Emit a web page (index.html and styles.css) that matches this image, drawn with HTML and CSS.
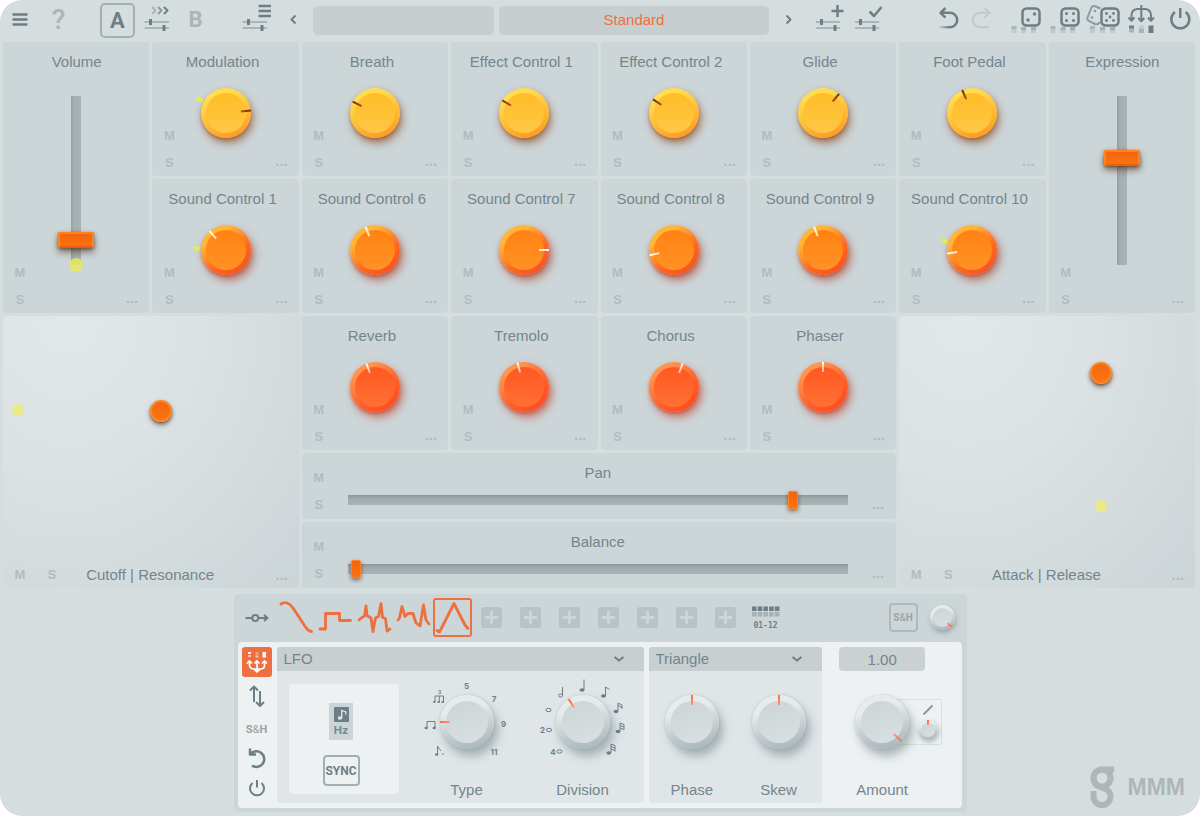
FILE: index.html
```html
<!DOCTYPE html>
<html lang="en">
<head>
<meta charset="utf-8">
<title>MMM</title>
<link rel="stylesheet" href="styles.css">
</head>
<body>
<main class="app">
<header class="topbar">
  <div class="group">
    <button class="icon" aria-label="Menu"><svg viewBox="0 0 35 40"><path class="s w25" d="M10.500 14.500h15M10.500 19.500h15M10.500 24.500h15"/></svg></button>
    <button class="glyph glyph--help" aria-label="Help">?</button>
  </div>
  <div class="group group--ab">
    <button class="glyph glyph--on">A</button>
    <button class="icon" aria-label="Copy A to B"><svg viewBox="0 0 35 40"><path class="s p" d="M5.500 22h24.500M5.500 28h24.500"/><path class="s w3" d="M11.500 19v6M25 25v6"/><path class="s p" d="M13 7l3.500 3.500L13 14"/><path class="s h" d="M19 7l3.500 3.500L19 14"/><path class="s" d="M25 7l3.500 3.500L25 14"/></svg></button>
    <button class="glyph">B</button>
  </div>
  <div class="group group--preset">
    <button class="icon" aria-label="Preset list"><svg viewBox="0 0 35 40"><path class="s p" d="M3.500 22H28M3.500 28H28"/><path class="s w3" d="M9.500 19v6M23 25v6"/><path class="s w25" d="M19.500 6h12.500M19.500 11h12.500M19.500 16h12.500"/></svg></button>
    <button class="icon icon--nav" aria-label="Previous preset"><svg viewBox="0 0 24 40"><path class="s" d="M13.500 15.500l-4 4 4 4"/></svg></button>
  </div>
  <div class="fields">
    <button class="field field--bank" aria-label="Bank"></button>
    <button class="field field--name">Standard</button>
  </div>
  <div class="group group--save">
    <button class="icon icon--nav" aria-label="Next preset"><svg viewBox="0 0 24 40"><path class="s" d="M10.500 15.500l4 4-4 4"/></svg></button>
    <button class="icon icon--add" aria-label="Add preset"><svg viewBox="0 0 35 40"><path class="s p" d="M4 22h24M4 28h24"/><path class="s w3" d="M9.500 19v6M23 25v6"/><path class="s w25" d="M25.500 5v12M19.500 11h12"/></svg></button>
    <button class="icon" aria-label="Save preset"><svg viewBox="0 0 35 40"><path class="s p" d="M4 22h24M4 28h24"/><path class="s w3" d="M9.500 19v6M23 25v6"/><path class="s w25" d="M18.500 11.500l4.500 4.500 7.500-9"/></svg></button>
  </div>
  <div class="group group--history">
    <button class="icon" aria-label="Undo"><svg viewBox="0 0 35 40"><defs><linearGradient id="fade" gradientUnits="userSpaceOnUse" x1="8" x2="19" y1="0" y2="0"><stop stop-color="#6d7f86" stop-opacity="0"/><stop offset="1" stop-color="#6d7f86"/></linearGradient></defs><path class="s w25" d="M15.500 8L10.500 12.800l5 4.800M11 12.800h9a7.200 7.200 0 0 1 0 14.400h-1"/><path d="M8.500 26H19v2.400H8.500z" fill="url(#fade)"/></svg></button>
    <button class="icon" disabled aria-label="Redo"><svg viewBox="0 0 35 40"><path class="s q" d="M19.500 8l5 4.800-5 4.800M24 12.800h-9a7.200 7.200 0 0 0 0 14.400h9"/></svg></button>
  </div>
  <div class="group group--random">
    <button class="icon" aria-label="Randomize a little"><svg viewBox="0 0 35 40"><path class="f p" d="M1.500 26h5v3h-5zM11 27h5v3h-5zM21 27h5v3h-5z"/><path class="f q" d="M1.500 29h5v4h-5zM11 29h5v4h-5zM21 29h5v4h-5z"/><rect class="s w25" x="12.500" y="8.500" width="17" height="17" rx="4"/><circle class="f" cx="18" cy="20" r="1.700"/><circle class="f" cx="24.500" cy="14" r="1.700"/></svg></button>
    <button class="icon" aria-label="Randomize more"><svg viewBox="0 0 35 40"><path class="f p" d="M2.500 26h5v3h-5zM12.500 27h5v3h-5zM22 27h5v3h-5z"/><path class="f q" d="M2.500 29h5v4h-5zM12.500 29h5v4h-5zM22 29h5v4h-5z"/><rect class="s w25" x="13.500" y="8.500" width="17" height="17" rx="4"/><g class="f"><circle cx="18.500" cy="13.500" r="1.500"/><circle cx="25.500" cy="13.500" r="1.500"/><circle cx="18.500" cy="20.500" r="1.500"/><circle cx="25.500" cy="20.500" r="1.500"/></g></svg></button>
    <button class="icon" aria-label="Randomize everything"><svg viewBox="0 0 35 40"><path class="f p" d="M4 26h5v3H4zM14 27h5v3h-5zM24 27h5v3h-5z"/><path class="f q" d="M4 29h5v4H4zM14 29h5v4h-5zM24 29h5v4h-5z"/><path class="s h" d="M14.500 8.500L9 6.300Q6.500 5.500 5.500 7.500L1.500 17.500Q.8 20 3 21.200L9 24q3 1 5-2"/><circle class="f h" cx="9" cy="11" r="1.300"/><circle class="f h" cx="6" cy="17.500" r="1.300"/><rect class="s w25" x="15.500" y="8.500" width="17" height="17" rx="4"/><g class="f"><circle cx="20.500" cy="13.500" r="1.400"/><circle cx="27.500" cy="13.500" r="1.400"/><circle cx="24" cy="17" r="1.400"/><circle cx="20.500" cy="20.500" r="1.400"/><circle cx="27.500" cy="20.500" r="1.400"/></g></svg></button>
    <button class="icon" aria-label="Modulation routing"><svg viewBox="0 0 35 40"><path class="s" d="M17.300 5v15M7.500 19v-4Q8 9.500 13 9h8.500Q26.500 9.500 27 15v4M4.500 17.500l3 3.200 3-3.200M14.300 18l3 3.200 3-3.200M24 17.500l3 3.200 3-3.200"/><path class="f" d="M5 25.500h5v3H5zM24.500 25.500h5V33h-5z"/><path class="f p" d="M5 28.500h5v4H5zM15 29h5v4h-5z"/><path class="f q" d="M15 25.500h5v4h-5z"/></svg></button>
    <button class="icon" aria-label="Power"><svg viewBox="0 0 35 40"><path class="s w25" d="M18.300 8v10M13 12a9 9 0 1 0 10.600 0"/></svg></button>
  </div>
</header>

<section class="grid">
  <div class="tile tile--tall">
    <label class="tile__label" for="volume">Volume</label>
    <div class="fader"><input id="volume" type="range" min="0" max="1000" value="111"><span class="dot dot--base"></span></div>
    <button class="ms ms--m">M</button><button class="ms ms--s">S</button><button class="more" aria-label="More">...</button>
  </div>
  <div class="tile"><label class="tile__label" for="k1">Modulation</label>
    <div class="knob knob--amber" style="--angle:84deg;--mod:-63deg"><span class="knob__tick"></span><span class="knob__mod"></span><input id="k1" type="range"></div>
    <button class="ms ms--m">M</button><button class="ms ms--s">S</button><button class="more" aria-label="More">...</button></div>
  <div class="tile"><label class="tile__label" for="k2">Breath</label>
    <div class="knob knob--amber" style="--angle:-63deg"><span class="knob__tick"></span><input id="k2" type="range"></div>
    <button class="ms ms--m">M</button><button class="ms ms--s">S</button><button class="more" aria-label="More">...</button></div>
  <div class="tile"><label class="tile__label" for="k3">Effect Control 1</label>
    <div class="knob knob--amber" style="--angle:-60deg"><span class="knob__tick"></span><input id="k3" type="range"></div>
    <button class="ms ms--m">M</button><button class="ms ms--s">S</button><button class="more" aria-label="More">...</button></div>
  <div class="tile"><label class="tile__label" for="k4">Effect Control 2</label>
    <div class="knob knob--amber" style="--angle:-57deg"><span class="knob__tick"></span><input id="k4" type="range"></div>
    <button class="ms ms--m">M</button><button class="ms ms--s">S</button><button class="more" aria-label="More">...</button></div>
  <div class="tile"><label class="tile__label" for="k5">Glide</label>
    <div class="knob knob--amber" style="--angle:40deg"><span class="knob__tick"></span><input id="k5" type="range"></div>
    <button class="ms ms--m">M</button><button class="ms ms--s">S</button><button class="more" aria-label="More">...</button></div>
  <div class="tile"><label class="tile__label" for="k6">Foot Pedal</label>
    <div class="knob knob--amber" style="--angle:-23deg"><span class="knob__tick"></span><input id="k6" type="range"></div>
    <button class="ms ms--m">M</button><button class="ms ms--s">S</button><button class="more" aria-label="More">...</button></div>
  <div class="tile tile--tall">
    <label class="tile__label" for="expression">Expression</label>
    <div class="fader"><input id="expression" type="range" min="0" max="1000" value="650"></div>
    <button class="ms ms--m">M</button><button class="ms ms--s">S</button><button class="more" aria-label="More">...</button>
  </div>

  <div class="tile"><label class="tile__label" for="k7">Sound Control 1</label>
    <div class="knob knob--orange" style="--angle:-41deg;--mod:-87deg"><span class="knob__tick"></span><span class="knob__mod"></span><input id="k7" type="range"></div>
    <button class="ms ms--m">M</button><button class="ms ms--s">S</button><button class="more" aria-label="More">...</button></div>
  <div class="tile"><label class="tile__label" for="k8">Sound Control 6</label>
    <div class="knob knob--orange" style="--angle:-22deg"><span class="knob__tick"></span><input id="k8" type="range"></div>
    <button class="ms ms--m">M</button><button class="ms ms--s">S</button><button class="more" aria-label="More">...</button></div>
  <div class="tile"><label class="tile__label" for="k9">Sound Control 7</label>
    <div class="knob knob--orange" style="--angle:90deg"><span class="knob__tick"></span><input id="k9" type="range"></div>
    <button class="ms ms--m">M</button><button class="ms ms--s">S</button><button class="more" aria-label="More">...</button></div>
  <div class="tile"><label class="tile__label" for="k10">Sound Control 8</label>
    <div class="knob knob--orange" style="--angle:-102deg"><span class="knob__tick"></span><input id="k10" type="range"></div>
    <button class="ms ms--m">M</button><button class="ms ms--s">S</button><button class="more" aria-label="More">...</button></div>
  <div class="tile"><label class="tile__label" for="k11">Sound Control 9</label>
    <div class="knob knob--orange" style="--angle:-21deg"><span class="knob__tick"></span><input id="k11" type="range"></div>
    <button class="ms ms--m">M</button><button class="ms ms--s">S</button><button class="more" aria-label="More">...</button></div>
  <div class="tile"><label class="tile__label" for="k12">Sound Control 10</label>
    <div class="knob knob--orange" style="--angle:-98deg;--mod:-71deg"><span class="knob__tick"></span><span class="knob__mod"></span><input id="k12" type="range"></div>
    <button class="ms ms--m">M</button><button class="ms ms--s">S</button><button class="more" aria-label="More">...</button></div>

  <div class="pad">
    <span class="dot" style="left:5.200%;top:34.600%"></span>
    <button class="puck" style="left:53.500%;top:35%" aria-label="Cutoff and resonance"></button>
    <div class="pad__bar"><button class="ms">M</button><button class="ms">S</button><span class="pad__label">Cutoff | Resonance</span><button class="more" aria-label="More">...</button></div>
  </div>
  <div class="tile"><label class="tile__label" for="k13">Reverb</label>
    <div class="knob knob--red" style="--angle:-20deg"><span class="knob__tick"></span><input id="k13" type="range"></div>
    <button class="ms ms--m">M</button><button class="ms ms--s">S</button><button class="more" aria-label="More">...</button></div>
  <div class="tile"><label class="tile__label" for="k14">Tremolo</label>
    <div class="knob knob--red" style="--angle:-15deg"><span class="knob__tick"></span><input id="k14" type="range"></div>
    <button class="ms ms--m">M</button><button class="ms ms--s">S</button><button class="more" aria-label="More">...</button></div>
  <div class="tile"><label class="tile__label" for="k15">Chorus</label>
    <div class="knob knob--red" style="--angle:20deg"><span class="knob__tick"></span><input id="k15" type="range"></div>
    <button class="ms ms--m">M</button><button class="ms ms--s">S</button><button class="more" aria-label="More">...</button></div>
  <div class="tile"><label class="tile__label" for="k16">Phaser</label>
    <div class="knob knob--red" style="--angle:0deg"><span class="knob__tick"></span><input id="k16" type="range"></div>
    <button class="ms ms--m">M</button><button class="ms ms--s">S</button><button class="more" aria-label="More">...</button></div>
  <div class="pad">
    <span class="dot" style="left:68.300%;top:69.700%"></span>
    <button class="puck" style="left:68.300%;top:21%" aria-label="Attack and release"></button>
    <div class="pad__bar"><button class="ms">M</button><button class="ms">S</button><span class="pad__label">Attack | Release</span><button class="more" aria-label="More">...</button></div>
  </div>

  <div class="strip">
    <div class="strip__ms"><button class="ms">M</button><button class="ms">S</button></div>
    <div class="strip__main"><label for="pan">Pan</label><input id="pan" type="range" min="0" max="1000" value="898"></div>
    <button class="more" aria-label="More">...</button>
  </div>
  <div class="strip">
    <div class="strip__ms"><button class="ms">M</button><button class="ms">S</button></div>
    <div class="strip__main"><label for="balance">Balance</label><input id="balance" type="range" min="0" max="1000" value="6"></div>
    <button class="more" aria-label="More">...</button>
  </div>
</section>

<footer class="bottom">
  <section class="mods">
    <nav class="slots">
      <button class="slot" aria-label="Signal chain"><svg viewBox="0 0 39 39"><path class="s" d="M7.500 20H14M20.500 20H29M26 17l3.500 3-3.500 3"/><circle class="s" cx="17.300" cy="20" r="3"/></svg></button>
      <button class="slot" aria-label="Slope"><svg viewBox="0 0 39 39"><path class="w" d="M4 6C8 3.500 12.500 5 16 10l5 7.500 7.500 11.500Q31 33 34.500 33.500"/></svg></button>
      <button class="slot" aria-label="Step"><svg viewBox="0 0 39 39"><path class="w" d="M4 31h5.500V15.500h14v7H34.500"/></svg></button>
      <button class="slot" aria-label="Pulses"><svg viewBox="0 0 39 39"><path class="w" d="M4 22l3-2.500 2.500-1.500L11 8l1 9.500 4 2.500 2 13.500L20.500 20l3-1.500L26 5.500l1.500 14 3 1L32 33l3-2"/></svg></button>
      <button class="slot" aria-label="Random"><svg viewBox="0 0 39 39"><path class="w" d="M4 22l1.500-2L8 8.500l3 10 3-3h5l3 9.500 4 3L29.500 7 32 22l3 4"/></svg></button>
      <button class="slot slot--on" aria-label="Triangle"><svg viewBox="0 0 39 39"><path class="w" d="M4 32.500L6.500 34 21 5.500 32 27l3 3.500"/></svg></button>
      <button class="slot" aria-label="Add"><span class="plus"></span></button>
      <button class="slot" aria-label="Add"><span class="plus"></span></button>
      <button class="slot" aria-label="Add"><span class="plus"></span></button>
      <button class="slot" aria-label="Add"><span class="plus"></span></button>
      <button class="slot" aria-label="Add"><span class="plus"></span></button>
      <button class="slot" aria-label="Add"><span class="plus"></span></button>
      <button class="slot" aria-label="Add"><span class="plus"></span></button>
      <button class="slot" aria-label="Pages"><svg viewBox="0 0 39 39"><path class="f" d="M7 8.500h4.600V13H7zM12.700 8.500h4.600V13h-4.600zM18.400 8.500H23V13h-4.600zM24.100 8.500h4.600V13h-4.600zM29.800 8.500h4.600V13h-4.600z"/><path class="f p" d="M7 14h4.600v4.500H7zM12.700 14h4.600v4.500h-4.600zM18.400 14H23v4.500h-4.600zM24.100 14h4.600v4.500h-4.600zM29.800 14h4.600v4.500h-4.600z"/><text class="pages" x="20.500" y="29.500">01-12</text></svg></button>
      <button class="sh sh--box">S<i>&amp;</i>H</button>
      <div class="knob knob--grey knob--small" style="--angle:134deg"><span class="knob__tick"></span><input type="range" aria-label="Hold amount"></div>
    </nav>
    <div class="editor">
      <aside class="tools">
        <button class="tool tool--on" aria-label="Routing"><svg viewBox="0 0 30 30"><path d="M6 5h3v2H6zM20.500 5h3.500v5.500h-3.500z" fill="#fff"/><path d="M6 8h3v2H6zM13.500 8.500h3v2h-3z" fill="#f9c3ab"/><path d="M13.500 5h3v3h-3z" fill="#f19a78"/><path d="M15 14.500V26M7.500 14.500v4Q8 22 12 22h6.500q4 0 4-3.500v-4M5 16.500L7.500 14l2.500 2.500M12.500 16.500L15 14l2.500 2.500M20 16.500l2.500-2.500 2.500 2.500M12 22l3 3 3.500-3" fill="none" stroke="#fff" stroke-width="1.600"/></svg></button>
        <button class="tool tool--flip" aria-label="Polarity"><svg viewBox="0 0 30 30"><path class="s" d="M12 21V6M8 9.500L12 5.500l4 4M18 10v14M14 21l4 4 4-4"/></svg></button>
        <button class="tool sh">S<i>&amp;</i>H</button>
        <button class="tool" aria-label="Reset"><svg viewBox="0 0 30 30"><path class="s w25" d="M8 4.500V10.500h6M8.500 10a7.800 7.800 0 1 1 1.500 11.500"/></svg></button>
        <button class="tool" aria-label="Bypass"><svg viewBox="0 0 30 30"><path class="s" d="M15 7v7.500M10.500 10a7 7 0 1 0 9 0"/></svg></button>
      </aside>
      <section class="unit unit--source">
        <div class="pick"><select aria-label="Source"><option>LFO</option></select><svg viewBox="0 0 12 8"><path class="s" d="M1.500 2L6 5.500 10.500 2"/></svg></div>
        <div class="unit__body">
          <div class="rate">
            <button class="rate__unit"><svg viewBox="0 0 15 15"><rect class="f" width="15" height="15" rx="1"/><ellipse cx="6" cy="11" rx="2.300" ry="1.800" fill="#dfe5e7"/><path d="M7.700 11V3.500l4 1.500v2.500" fill="none" stroke="#dfe5e7" stroke-width="1.300"/></svg>Hz</button>
            <button class="rate__sync">SYNC</button>
          </div>
          <div class="param">
            <div class="dial">
              <svg viewBox="0 0 116 102">
                <g class="num"><text x="57.500" y="18">5</text><text x="85" y="31">7</text><text x="94.500" y="56">9</text><text x="85" y="84">11</text><text class="num--xs" x="30.500" y="23">3</text></g>
                <path class="n" d="M26 31v-6h8.500v6M30.300 25v6M18 57v-6.500h8V57M28.500 83.500V75q1.500 3 3.500 5"/>
                <g class="f"><ellipse cx="25.300" cy="31" rx="1.400" ry="1"/><ellipse cx="29.600" cy="31" rx="1.400" ry="1"/><ellipse cx="33.800" cy="31" rx="1.400" ry="1"/><ellipse cx="17.200" cy="57" rx="1.700" ry="1.200"/><ellipse cx="25.200" cy="57" rx="1.700" ry="1.200"/><ellipse cx="27.700" cy="83.500" rx="1.700" ry="1.300"/><circle cx="34" cy="83" r=".8"/></g>
              </svg>
              <div class="knob knob--grey" style="--angle:-90deg"><span class="knob__tick"></span><input id="type" type="range"></div>
            </div>
            <label for="type">Type</label>
          </div>
          <div class="param">
            <div class="dial">
              <svg viewBox="0 0 116 102">
                <g class="num"><text x="17.500" y="62">2</text><text x="28" y="83.500">4</text></g>
                <g class="n"><ellipse cx="23.500" cy="39" rx="2.600" ry="1.700"/><ellipse cx="24" cy="59" rx="2.600" ry="1.700"/><ellipse cx="34.500" cy="80.500" rx="2.600" ry="1.700"/><ellipse cx="35.500" cy="24.500" rx="1.900" ry="1.500"/><path d="M37.500 24.500V16M59 19V8.500M80.500 25V16l4 2.500M93 40V32l4 2v4M93 34.500l4 2M95 60V52l4 1.500v5M95 54.500l4 1.500M95 57l4 1.500M86 81.500V73l4 1.500v6M86 75.500l4 1.500M86 78l4 1.500"/></g>
                <g class="f"><ellipse cx="57" cy="19" rx="2.500" ry="1.800"/><ellipse cx="78.500" cy="25" rx="2.500" ry="1.800"/><ellipse cx="91" cy="40.500" rx="2.400" ry="1.700"/><ellipse cx="93" cy="60.500" rx="2.400" ry="1.700"/><ellipse cx="83.800" cy="82" rx="2.400" ry="1.700"/></g>
              </svg>
              <div class="knob knob--grey" style="--angle:-32deg"><span class="knob__tick"></span><input id="division" type="range"></div>
            </div>
            <label for="division">Division</label>
          </div>
        </div>
      </section>
      <section class="unit unit--shape">
        <div class="pick"><select aria-label="Shape"><option>Triangle</option></select><svg viewBox="0 0 12 8"><path class="s" d="M1.500 2L6 5.500 10.500 2"/></svg></div>
        <div class="unit__body">
          <div class="param"><div class="dial"><div class="knob knob--grey" style="--angle:0deg"><span class="knob__tick"></span><input id="phase" type="range"></div></div><label for="phase">Phase</label></div>
          <div class="param"><div class="dial"><div class="knob knob--grey" style="--angle:0deg"><span class="knob__tick"></span><input id="skew" type="range"></div></div><label for="skew">Skew</label></div>
        </div>
      </section>
      <section class="amount">
        <input class="amount__value" type="text" value="1.00" aria-label="Amount value">
        <div class="param">
          <div class="dial">
            <div class="curve"><svg viewBox="0 0 12 12"><path d="M1.500 10.500l9-9" stroke="#8e9698" stroke-width="2" fill="none"/></svg><div class="knob knob--grey knob--tiny" style="--angle:0deg"><span class="knob__tick"></span><input type="range" aria-label="Curve"></div></div>
            <div class="knob knob--grey" style="--angle:135deg"><span class="knob__tick"></span><input id="amount" type="range"></div>
          </div>
          <label for="amount">Amount</label>
        </div>
      </section>
    </div>
  </section>
  <div class="brand"><svg viewBox="0 0 24 42"><circle cx="12" cy="12" r="8.500"/><path d="M12 3.500h12M3.500 12Q4 19 10 21l4 1.500q6.500 2 6.500 8a8.500 8.500 0 0 1-17 0V25"/></svg><span>MMM</span></div>
</footer>
</main>
</body>
</html>
```
FILE: styles.css
```css
* { box-sizing: border-box; }
body {
  margin: 0;
  background: #fff;
  color: #74858c;
  font: 15px/18px "Liberation Sans", Arial, sans-serif;
}
button, input, select {
  margin: 0;
  padding: 0;
  border: 0;
  background: none;
  color: inherit;
  font: inherit;
}
.app {
  display: flex;
  flex-direction: column;
  min-height: 100vh;
  border-radius: 22px;
  background: #d5dddf;
}

/* icon strokes and fills */
.s { fill: none; stroke: #6d7f86; stroke-width: 2; stroke-linejoin: round; }
.f { fill: #6d7f86; }
.p { opacity: .42; }
.h { opacity: .7; }
.q { opacity: .2; }
.w3 { stroke-width: 3; }
.w25 { stroke-width: 2.500; }
.w { fill: none; stroke: #ee7040; stroke-width: 2.800; stroke-linecap: round; stroke-linejoin: round; }

/* top bar */
.topbar { display: flex; align-items: center; height: 40px; padding: 0 3px 0 2px; }
.group { display: flex; align-items: center; gap: 4px; }
.group--ab { margin-left: 24px; }
.group--preset { margin-left: 26px; gap: 8px; }
.icon { display: block; width: 35px; height: 40px; }
.icon svg { display: block; width: 100%; height: 100%; }
.icon--nav { width: 24px; }
.icon--add { margin-left: 8px; }
.glyph {
  width: 35px;
  height: 35px;
  border-radius: 5px;
  color: #acb5b7;
  font: 700 22px/32px Roboto, sans-serif;
}
.glyph--help { font-size: 28px; font-weight: 500; }
.glyph--on { border: 2px solid #a2afb3; color: #6d7f86; }
.fields { display: flex; flex: 1; gap: 5px; margin: 0 7px; }
.field { height: 29px; border-radius: 5px; background: #c6cecf; color: #f0703c; }
.field--bank { flex: 181; }
.field--name { flex: 270; }
.group--history { margin-left: 44px; gap: 0; }
.group--random { margin-left: 10px; gap: 3px; }

/* controller grid */
.grid {
  display: grid;
  grid-template-columns: repeat(8, minmax(0, 1fr));
  grid-template-rows: 134px 134px 134px 66px 66px;
  gap: 3px;
  padding: 2px 5px 0 3px;
}
.tile, .pad, .strip { position: relative; border-radius: 4px; background: #ccd5d8; }
.tile { display: flex; flex-direction: column; align-items: center; gap: 17px; padding-top: 11px; }
.tile__label { padding-right: 6px; }
.tile--tall { grid-row: span 2; gap: 25px; }
.tile--tall .tile__label { padding: 0 0 0 1px; }
.ms { width: 18px; height: 18px; color: #b1bcbf; font-size: 13px; font-weight: 700; text-align: center; }
.ms--m { position: absolute; left: 8px; bottom: 31px; }
.ms--s { position: absolute; left: 8px; bottom: 4px; }
.more { height: 18px; color: #b1bcbf; font-size: 15px; font-weight: 700; }
.tile > .more { position: absolute; right: 11px; bottom: 6px; }

.dot { position: absolute; width: 12px; height: 12px; margin: -6px; border-radius: 50%; background: #e9e985; }
.dot--base { left: 50%; bottom: 0; width: 14px; height: 14px; margin: -7px; background: #e6e95cdd; }

/* knobs */
.knob {
  --size: 50px;
  --rim: 5px;
  position: relative;
  width: var(--size);
  height: var(--size);
  border-radius: 50%;
}
.knob::before { content: ""; position: absolute; inset: var(--rim); border-radius: 50%; background: var(--face); }
.knob input { position: absolute; inset: 0; width: 100%; height: 100%; opacity: 0; }
.knob__tick, .knob__mod { position: absolute; inset: 0; transform: rotate(var(--angle)); }
.knob__tick::before {
  content: "";
  position: absolute;
  left: 50%;
  top: 0;
  width: 2px;
  height: 10px;
  margin-left: -1px;
  background: var(--mark);
}
.knob__mod { transform: rotate(var(--mod)); }
.knob__mod::before {
  content: "";
  position: absolute;
  left: 50%;
  top: -8px;
  width: 4px;
  height: 7px;
  margin-left: -2px;
  border-radius: 2px;
  background: #e5f03a;
}
.knob--amber {
  --face: linear-gradient(#ffbc27, #ffc846);
  --mark: linear-gradient(#6e2b12, #a8561e);
  background: linear-gradient(160deg, #ffdc50 20%, #ffb52f 65%, #ff8f1e);
  box-shadow: 2px 5px 9px #8a4a20aa, 0 2px 3px #b0601c80;
}
.knob--orange {
  --face: linear-gradient(#ff8212, #ff9225);
  --mark: linear-gradient(#fff, #ffe2b8);
  background: linear-gradient(145deg, #ffb638 25%, #ff6a22 60%, #f4481c);
  box-shadow: 3px 5px 9px #b0402caa, 0 2px 3px #c0502c80;
}
.knob--red {
  --face: linear-gradient(#ff5823, #ff7033);
  --mark: linear-gradient(#fff, #ffb48c);
  background: linear-gradient(145deg, #ff944e 20%, #ff5f2c 60%, #ff421e);
  box-shadow: 3px 5px 9px #c4402caa, 0 2px 3px #c0502c80;
}
.knob--grey {
  --size: 54px;
  --rim: 6px;
  --face: linear-gradient(160deg, #ccd4d6, #dae0e1);
  --mark: linear-gradient(#ff6a3a, #fb9a78);
  background: linear-gradient(165deg, #e6ebec 30%, #c2cbce 65%, #a3b1b5);
  box-shadow: 4px 7px 10px #6c7e8588, 0 0 2px #8c9a9f80;
}
.knob--small { --size: 25px; --rim: 3px; box-shadow: 1px 3px 4px #6c7e8580; }
.knob--tiny { --size: 20px; --rim: 3px; box-shadow: 1px 2px 4px #6c7e8580; }
.knob--small .knob__tick::before, .knob--tiny .knob__tick::before { height: 5px; }

/* faders */
.fader { position: relative; height: 169px; }
.fader input {
  display: block;
  width: 36px;
  height: 169px;
  appearance: none;
  writing-mode: vertical-lr;
  direction: rtl;
  background: linear-gradient(90deg, #959e9f, #a6afb1 3px, #a9b2b4) center / 10px 100% no-repeat;
}
.fader input::-webkit-slider-thumb {
  appearance: none;
  width: 36px;
  height: 16px;
  border: 2px solid #fb8420;
  border-bottom-color: #e85f10;
  border-radius: 2px;
  background: linear-gradient(#f4630c, #fa7212);
  box-shadow: 0 4px 7px #4a281099, 0 1px 3px #5a301080;
}
.strip { display: flex; grid-column: 3 / span 4; padding: 0 12px 0 8px; }
.strip__ms { display: flex; flex-direction: column; gap: 9px; padding-top: 16px; }
.strip__main { display: flex; flex: 1; flex-direction: column; align-items: center; gap: 9px; margin: 0 24px 0 20px; padding-top: 11px; }
.strip__main input {
  display: block;
  width: 100%;
  height: 17px;
  appearance: none;
  background: linear-gradient(#8e9798, #a2abad 4px, #a9b2b4) center / 100% 10px no-repeat;
}
.strip__main input::-webkit-slider-thumb {
  appearance: none;
  width: 10px;
  height: 18px;
  border: 1px solid #fb8420;
  border-radius: 2px;
  background: linear-gradient(#f4630c, #fa7212);
  box-shadow: 0 2px 4px #4a281099;
}
.strip .more { align-self: flex-end; margin-bottom: 6px; }

/* XY pads */
.pad {
  display: flex;
  flex-direction: column;
  justify-content: flex-end;
  grid-column: span 2;
  grid-row: span 3;
  background: radial-gradient(ellipse at 22% 0%, #e2e8e8, #dce2e4 40%, #d3dbdd 70%, #cbd4d7);
}
.pad__bar { display: flex; align-items: center; gap: 14px; padding: 0 11px 3px 8px; }
.pad__label { flex: 1; padding-right: 50px; text-align: center; }
.pad__bar .more { line-height: 20px; height: 20px; margin-left: -14px; }
.puck {
  position: absolute;
  width: 22px;
  height: 22px;
  margin: -11px;
  border: 2px solid #fb8420;
  border-radius: 50%;
  background: linear-gradient(#f4680f, #f97512);
  box-shadow: 0 3px 5px #4a281099, 0 1px 2px #5a301080;
}

/* bottom area */
.bottom {
  display: grid;
  grid-template-columns: 1fr minmax(0, 733px) 1fr;
  padding: 6px 0 4px;
}
.mods { grid-column: 2; align-self: start; padding: 4px 5px 4px 4px; border-radius: 5px; background: #ccd5d7; }
.slots { display: flex; align-items: center; padding-right: 7px; }
.slot { display: grid; place-items: center; width: 39px; height: 39px; border-radius: 3px; }
.slot svg { width: 39px; height: 39px; }
.slot--on { border: 2px solid #ee7040; }
.slot--on svg { margin: -2px; }
.plus {
  width: 21px;
  height: 21px;
  border-radius: 3px;
  background:
    linear-gradient(#ccd5d7, #ccd5d7) center / 13px 3px no-repeat,
    linear-gradient(#ccd5d7, #ccd5d7) center / 3px 13px no-repeat,
    #b8c3c6;
}
.pages { fill: #6d7f86; font: 700 8px "DejaVu Sans Mono", monospace; text-anchor: middle; }
.sh { color: #99a2a4; font: 700 11px/14px Roboto, sans-serif; }
.sh i { font-style: normal; font-weight: 400; }
.sh--box { width: 29px; height: 29px; margin: 0 12px 0 auto; border: 2px solid #afb8ba; border-radius: 4px; font-size: 10px; }

.editor { display: flex; gap: 5px; margin-top: 5px; padding: 5px 0; border-radius: 4px; background: #edf1f2; }
.tools { display: flex; flex-direction: column; align-items: center; width: 34px; padding-left: 4px; }
.tool { display: grid; grid-auto-flow: column; place-content: center; width: 30px; height: 29px; border-radius: 3px; }
.tool svg { width: 30px; height: 30px; }
.tool--on { height: 30px; background: #ee7040; }
.tool--flip { height: 38px; }
.unit { display: flex; flex-direction: column; border-radius: 4px; background: #e0e6e8; }
.unit--source { flex: 367; }
.unit--shape { flex: 174; }
.pick { display: grid; align-items: center; border-radius: 3px 3px 0 0; background: #c7cfd1; }
.pick select, .pick svg { grid-area: 1 / 1; }
.pick select { height: 24px; padding-left: 7px; appearance: none; }
.pick svg { width: 12px; height: 8px; margin-right: 19px; justify-self: end; pointer-events: none; }
.unit__body { display: flex; padding-right: 3px; }
.unit--shape .unit__body { padding: 0; }
.param { display: flex; flex: 1; flex-direction: column; align-items: center; gap: 8px; padding-bottom: 4px; }
.dial { display: grid; place-items: center; height: 102px; }
.dial > * { grid-area: 1 / 1; }
.dial > svg { width: 116px; height: 102px; }
.n { fill: none; stroke: #6d7f86; stroke-width: 1; }
.num { fill: #6d7f86; font: 700 8px Inter, sans-serif; text-anchor: middle; }
.num--xs { font-size: 5px; }
.rate {
  display: flex;
  flex-direction: column;
  align-items: center;
  gap: 15px;
  width: 110px;
  margin: 13px 10px 9px 12px;
  padding: 19px 5px 8px 0;
  border-radius: 4px;
  background: #edf1f2;
}
.rate__unit {
  display: flex;
  flex-direction: column;
  align-items: center;
  gap: 1px;
  width: 24px;
  padding: 4px 0 3px;
  background: #cbd4d6;
  font: 700 11px/14px Inter, sans-serif;
}
.rate__unit svg { width: 15px; height: 15px; }
.rate__sync { width: 37px; height: 31px; border: 2px solid #a2afb4; border-radius: 4px; color: #6d7f86; font: 700 12px/20px Roboto, sans-serif; }
.amount { display: flex; flex: 111; flex-direction: column; align-items: center; min-width: 0; padding-right: 24px; }
.amount__value { width: 86px; height: 24px; border-radius: 4px; background: #cbd0d1; text-align: center; }
.curve {
  display: flex;
  flex-direction: column;
  align-items: flex-end;
  gap: 4px;
  width: 60px;
  margin-left: 60px;
  padding: 4px 3px 4px 0;
  border: 1px solid #d9dedf;
  border-radius: 2px;
}
.curve svg { width: 12px; height: 12px; margin-right: 4px; }
.brand { display: flex; align-items: center; align-self: end; justify-self: end; gap: 14px; margin: 0 15px 4px 0; color: #adb6b9; font-size: 23px; font-weight: 700; line-height: 40px; }
.brand svg { width: 24px; height: 42px; fill: none; stroke: #adb6b9; stroke-width: 6; }
```
